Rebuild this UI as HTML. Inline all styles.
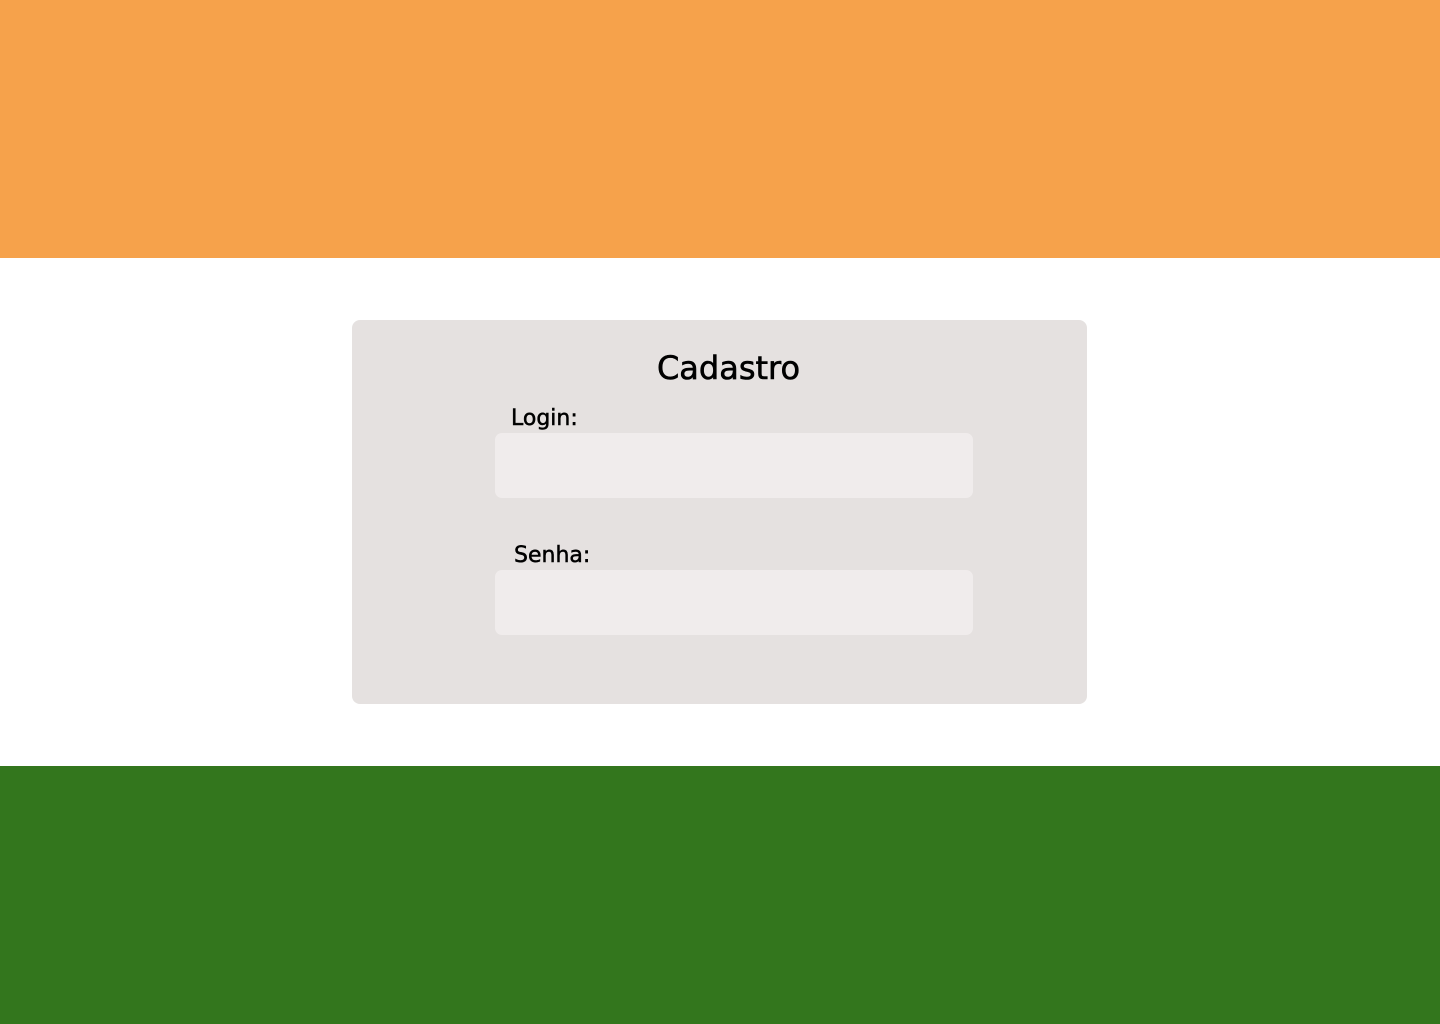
<!DOCTYPE html>
<html><head><meta charset="utf-8"><style>
html,body{margin:0;padding:0;width:1440px;height:1024px;overflow:hidden;font-family:"DejaVu Sans","Liberation Sans",sans-serif;background:#fff;position:relative}
.top{position:absolute;left:0;top:0;width:1440px;height:258px;background:#f6a24b}
.bot{position:absolute;left:0;top:766px;width:1440px;height:258px;background:#33761d}
.card{position:absolute;left:352px;top:320px;width:735px;height:384px;background:#e5e1e0;border-radius:8px}
.t{position:absolute;left:0;width:1457px;top:349px;text-align:center;font-size:32px;color:#000;-webkit-text-stroke:0.6px #000}
.l{position:absolute;font-size:22px;color:#000;-webkit-text-stroke:0.5px #000}
.in{position:absolute;left:495px;width:478px;height:65px;background:#f0ecec;border-radius:7px}
</style></head><body>
<div class="top"></div><div class="bot"></div>
<div class="card"></div>
<div class="t">Cadastro</div>
<div class="l" style="left:511px;top:406px">Login:</div>
<div class="in" style="top:433px"></div>
<div class="l" style="left:514px;top:543px">Senha:</div>
<div class="in" style="top:570px"></div>
</body></html>
